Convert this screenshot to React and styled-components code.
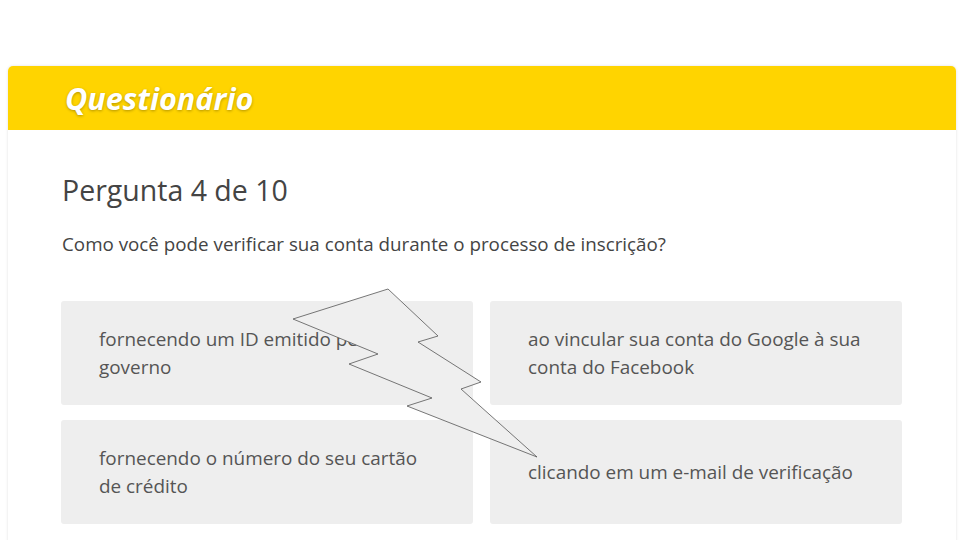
import React from "react";
import styled, { createGlobalStyle } from "styled-components";

const Global = createGlobalStyle`
  html, body { margin: 0; padding: 0; background: #ffffff; }
  body { font-family: "Open Sans", sans-serif; overflow: hidden; }
`;

const Page = styled.div`
  padding: 66px 4px 0 8px;
  height: 540px;
  box-sizing: border-box;
  overflow: hidden;
`;

const Card = styled.section`
  position: relative;
  background: #fff;
  border-radius: 5px 5px 0 0;
  box-shadow: 0 0 3px rgba(0, 0, 0, 0.12);
  min-height: 520px;
`;

const Header = styled.header`
  background: #ffd400;
  height: 64px;
  border-radius: 5px 5px 0 0;
  display: flex;
  align-items: center;
  padding-left: 57px;
`;

const HeaderTitle = styled.h1`
  margin: 0;
  font-family: "Open Sans", sans-serif;
  font-style: italic;
  font-weight: 700;
  font-size: 30.6px;
  color: #fff;
  text-shadow: 0 1px 3px rgba(0, 0, 0, 0.3);
`;

const Body = styled.div`
  padding: 42px 54px 0 53px;
`;

const Heading = styled.h2`
  margin: 0 0 0 1px;
  font-family: "Open Sans", sans-serif;
  font-weight: 400;
  font-size: 28.5px;
  color: #444;
  line-height: 36px;
`;

const Question = styled.p`
  margin: 22px 0 0 1px;
  font-size: 18.8px;
  color: #444;
  line-height: 28px;
`;

const Options = styled.div`
  margin-top: 43px;
  display: grid;
  grid-template-columns: 1fr 1fr;
  column-gap: 17px;
  row-gap: 15px;
`;

const Option = styled.button`
  all: unset;
  box-sizing: border-box;
  height: 104px;
  background: #eeeeee;
  border-radius: 3px;
  padding: 0 38px;
  display: flex;
  align-items: center;
  font-family: "Open Sans", sans-serif;
  font-size: 18.9px;
  line-height: 28px;
  color: #555;
`;

const Bolt = styled.svg`
  position: absolute;
  left: 0;
  top: 0;
  pointer-events: none;
  overflow: visible;
`;

const answers = [
  "fornecendo um ID emitido pelo governo",
  "ao vincular sua conta do Google à sua conta do Facebook",
  "fornecendo o número do seu cartão de crédito",
  "clicando em um e-mail de verificação",
];

export default function App() {
  return (
    <>
      <Global />
      <Page>
        <Card>
          <Header>
            <HeaderTitle>Questionário</HeaderTitle>
          </Header>
          <Body>
            <Heading>Pergunta 4 de 10</Heading>
            <Question>Como você pode verificar sua conta durante o processo de inscrição?</Question>
            <Options>
              {answers.map((a) => (
                <Option key={a}>{a}</Option>
              ))}
            </Options>
          </Body>
          <Bolt width="948" height="480">
            <polygon
              transform="translate(-8,-66)"
              points="388,289 438,336 418,342 481,382 461,389 537,457 407,406 432,398 349,364 378,354 293,319"
              fill="#efefef"
              stroke="#555"
              strokeWidth="0.8"
            />
          </Bolt>
        </Card>
      </Page>
    </>
  );
}
